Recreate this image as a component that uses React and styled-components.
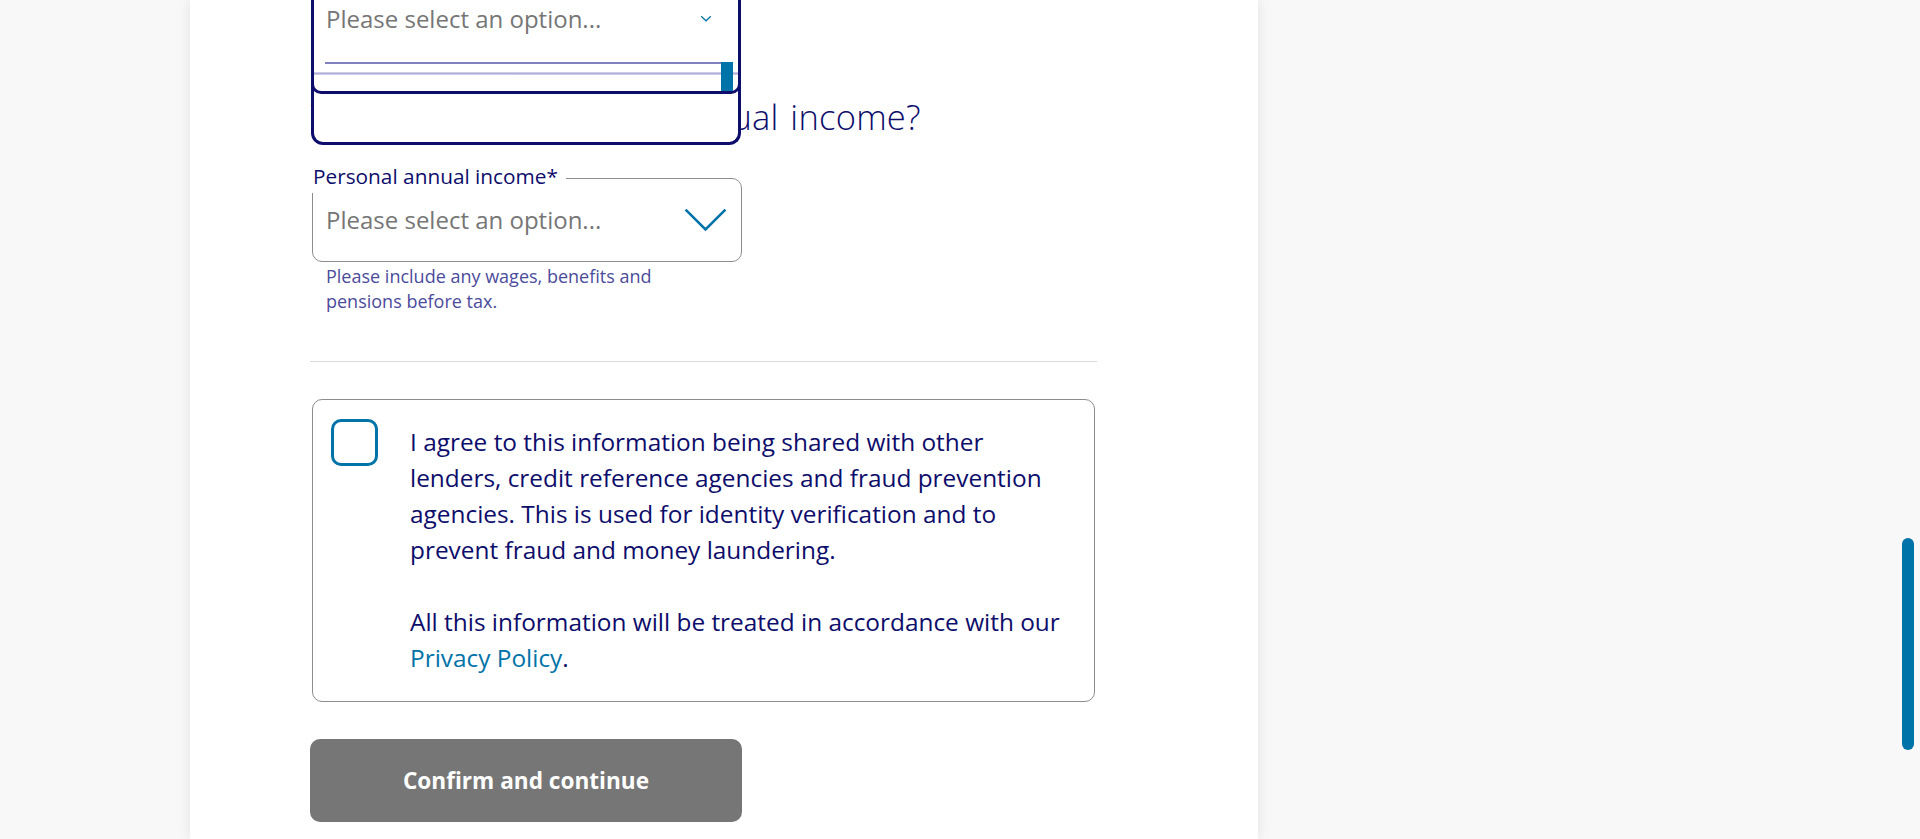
import React from "react";
import styled, { createGlobalStyle } from "styled-components";

const navy = "#0d0d6b";
const blue = "#0073a8";

const GlobalStyle = createGlobalStyle`
  html, body {
    margin: 0;
    padding: 0;
    height: 100%;
    overflow: hidden;
    background: #f8f8f8;
  }
  body {
    font-family: "Open Sans", Lato, "Liberation Sans", sans-serif;
    color: ${navy};
  }
  * {
    box-sizing: border-box;
  }
`;

const Card = styled.main`
  width: 1068px;
  min-height: 100vh;
  margin-left: 190px;
  padding-left: 120px;
  background: #fff;
  box-shadow: 0 0 14px rgba(0, 0, 0, 0.09);
`;

const Form = styled.form`
  width: 787px;
  display: flex;
  flex-direction: column;
  align-items: flex-start;
`;

/* previous question - dropdown left open over the heading */
const OpenSelect = styled.div`
  position: relative;
  z-index: 2;
  width: 100%;
  height: 62px;
`;

const Frame = styled.div`
  position: absolute;
  top: 0;
  left: 1px;
  width: 430px;
  height: 145px;
  border: 3px solid ${navy};
  border-top: none;
  border-radius: 0 0 12px 12px;
  background: #fff;
`;

const Menu = styled.div`
  margin: 0 -3px;
  height: 94px;
  border: 3px solid ${navy};
  border-top: none;
  border-radius: 0 0 10px 10px;
  display: flex;
  flex-direction: column;
`;

const MenuRow = styled.div`
  height: 36px;
  padding: 0 26px 0 12px;
  display: flex;
  align-items: center;
  justify-content: space-between;
`;

const Placeholder = styled.span`
  font-size: 24px;
  color: #767676;
`;

const Underline = styled.div`
  height: 2px;
  margin: 26px 6px 0 11px;
  background: #8181bf;
`;

const ListArea = styled.div`
  position: relative;
  flex: 1;
`;

const Shade = styled.div`
  height: 3px;
  margin-top: 8px;
  background: linear-gradient(
    to bottom,
    rgba(110, 110, 185, 0.25),
    rgba(110, 110, 185, 0.55),
    rgba(110, 110, 185, 0.25)
  );
`;

const ListThumb = styled.div`
  position: absolute;
  top: -2px;
  right: 5px;
  bottom: 0;
  width: 12px;
  background: ${blue};
`;

const Heading = styled.h2`
  margin: 33px 0 0;
  font-size: 34.5px;
  line-height: 44px;
  font-weight: 300;
  letter-spacing: 0.25px;
  word-spacing: 2.5px;
  color: ${navy};
  white-space: nowrap;
`;

const Field = styled.fieldset`
  width: 430px;
  margin: 25px 0 0 2px;
  padding: 0;
  border: 1.5px solid #8c8c8c;
  border-radius: 10px;
`;

const Legend = styled.legend`
  margin-left: -1px;
  padding: 0 8px 5px 1px;
  font-size: 20.8px;
  line-height: 24px;
  color: ${navy};
`;

const SelectControl = styled.div`
  height: 67.5px;
  padding: 0 13px 14px 13px;
  display: flex;
  align-items: center;
  justify-content: space-between;
`;

const Helper = styled.p`
  margin: 2px 0 0 16px;
  width: 350px;
  font-size: 18px;
  line-height: 25px;
  color: #4b4b9b;
`;

const Divider = styled.hr`
  width: 100%;
  margin: 47px 0 0;
  border: none;
  border-top: 1px solid #dadada;
`;

const ConsentBox = styled.label`
  width: 783px;
  margin: 37px 2px 0;
  padding: 24px 14px 25px 18px;
  border: 1.5px solid #8c8c8c;
  border-radius: 10px;
  display: flex;
  align-items: flex-start;
  gap: 32px;
`;

const Checkbox = styled.span`
  flex: none;
  width: 47px;
  height: 47px;
  margin-top: -5px;
  border: 3px solid ${blue};
  border-radius: 10px;
`;

const ConsentText = styled.div`
  font-size: 24.4px;
  line-height: 36px;
  color: ${navy};
  white-space: nowrap;

  p {
    margin: 0;
  }
  p + p {
    margin-top: 36px;
  }
  a {
    color: ${blue};
    text-decoration: none;
  }
`;

const Button = styled.button`
  width: 432px;
  height: 83px;
  margin-top: 37px;
  border: none;
  border-radius: 10px;
  background: #767676;
  color: #fff;
  font-family: inherit;
  font-size: 22.6px;
  font-weight: 700;
`;

const PageThumb = styled.div`
  position: fixed;
  top: 538px;
  right: 6px;
  width: 12px;
  height: 212px;
  border-radius: 6px;
  background: ${blue};
`;

const Chevron = ({ w, h, sw }) => (
  <svg width={w} height={h} viewBox={`0 0 ${w} ${h}`} fill="none">
    <path
      d={`M${sw} ${sw} L${w / 2} ${h - sw} L${w - sw} ${sw}`}
      stroke={blue}
      strokeWidth={sw}
    />
  </svg>
);

export default function App() {
  return (
    <>
      <GlobalStyle />
      <Card>
        <Form onSubmit={(e) => e.preventDefault()}>
          <OpenSelect>
            <Frame>
              <Menu>
                <MenuRow>
                  <Placeholder>Please select an option...</Placeholder>
                  <Chevron w={12} h={7} sw={1.2} />
                </MenuRow>
                <Underline />
                <ListArea>
                  <Shade />
                  <ListThumb />
                </ListArea>
              </Menu>
            </Frame>
          </OpenSelect>

          <Heading>What is your personal annual income?</Heading>

          <Field>
            <Legend>Personal annual income*</Legend>
            <SelectControl>
              <Placeholder>Please select an option...</Placeholder>
              <Chevron w={45} h={25} sw={2.6} />
            </SelectControl>
          </Field>
          <Helper>
            Please include any wages, benefits and pensions before tax.
          </Helper>

          <Divider />

          <ConsentBox>
            <Checkbox />
            <ConsentText>
              <p>
                I agree to this information being shared with other
                <br />
                lenders, credit reference agencies and fraud prevention
                <br />
                agencies. This is used for identity verification and to
                <br />
                prevent fraud and money laundering.
              </p>
              <p>
                All this information will be treated in accordance with our
                <br />
                <a href="#privacy">Privacy Policy</a>.
              </p>
            </ConsentText>
          </ConsentBox>

          <Button type="button">Confirm and continue</Button>
        </Form>
      </Card>
      <PageThumb />
    </>
  );
}
